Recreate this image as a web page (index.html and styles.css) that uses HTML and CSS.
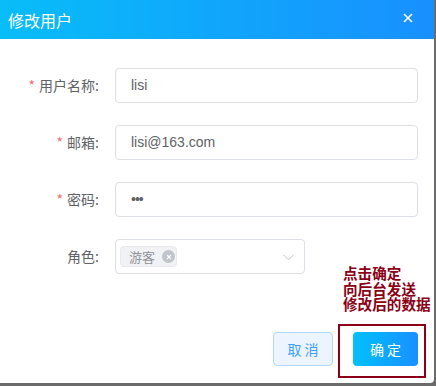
FILE: index.html
```html
<!DOCTYPE html>
<html lang="zh-CN">
<head>
    <meta charset="UTF-8">
    <title>修改用户</title>
    <link rel="stylesheet" href="styles.css">
</head>
<body>
<div class="dialog">
    <div class="dialog_header">
        <span class="dialog_title">修改用户</span>
        <span class="dialog_close">
            <svg width="10" height="10" viewBox="0 0 10 10"><path d="M1 1L9 9M9 1L1 9" stroke="#fff" stroke-width="1.6" fill="none"/></svg>
        </span>
    </div>
    <div class="dialog_body">
        <div class="form_item">
            <label class="form_label"><i class="req">*</i>用户名称:</label>
            <div class="input">lisi</div>
        </div>
        <div class="form_item">
            <label class="form_label"><i class="req">*</i>邮箱:</label>
            <div class="input">lisi@163.com</div>
        </div>
        <div class="form_item">
            <label class="form_label"><i class="req">*</i>密码:</label>
            <div class="input pwd">•••</div>
        </div>
        <div class="form_item">
            <label class="form_label">角色:</label>
            <div class="select">
                <span class="tag">游客<i class="tag_close">
                    <svg width="6" height="6" viewBox="0 0 6 6"><path d="M1 1L5 5M5 1L1 5" stroke="#fff" stroke-width="1.1" fill="none"/></svg>
                </i></span>
                <svg class="arrow" width="11" height="7" viewBox="0 0 11 7"><path d="M0.5 0.8L5.5 5.8L10.5 0.8" stroke="#c0c4cc" stroke-width="1" fill="none"/></svg>
            </div>
        </div>
    </div>
    <div class="dialog_footer">
        <button class="btn btn_cancel">取 消</button>
        <button class="btn btn_ok">确 定</button>
        <!--标注-->
        <div class="note">
            <p>点击确定</p>
            <p>向后台发送</p>
            <p>修改后的数据</p>
        </div>
        <div class="note_box"></div>
    </div>
</div>
</body>
</html>
```

FILE: styles.css
```css
*{margin: 0;padding: 0;box-sizing: border-box;}
body{
    width: 436px;
    height: 386px;
    background-color: #6b6b6b;
    font-family: "Liberation Sans", "Noto Sans CJK SC", sans-serif;
    font-size: 14px;
    color: #606266;
    overflow: hidden;
}
.dialog{
    width: 434px;
    height: 383px;
    background-color: #fff;
    border-radius: 0 0 4px 0;
}
.dialog_header{
    height: 39px;
    display: flex;
    align-items: center;
    justify-content: space-between;
    padding: 0 21px 0 8px;
    background: linear-gradient(to right, #08bdf8 0%, #1890ff 100%);
}
.dialog_title{
    color: #fff;
    font-size: 16px;
    font-family: "Noto Sans CJK SC", sans-serif;
    line-height: 20px;
}
.dialog_close{
    display: flex;
    margin-top: -3px;
}
.dialog_body{
    padding: 29px 16px 0 0;
}
.form_item{
    display: flex;
    align-items: center;
    height: 35px;
    margin-bottom: 22px;
}
.form_label{
    width: 115px;
    padding-right: 16px;
    text-align: right;
    line-height: 35px;
    color: #606266;
    font-family: "Noto Sans CJK SC", sans-serif;
}
.req{
    font-style: normal;
    color: #f56c6c;
    margin-right: 4px;
}
.input{
    flex: 1;
    height: 35px;
    line-height: 33px;
    padding: 0 15px;
    border: 1px solid #dcdfe6;
    border-radius: 4px;
    color: #606266;
}
.pwd{
    font-size: 14px;
    letter-spacing: -1px;
}
.select{
    width: 190px;
    height: 35px;
    border: 1px solid #dcdfe6;
    border-radius: 4px;
    display: flex;
    align-items: center;
    justify-content: space-between;
    padding: 0 10px 0 4px;
}
.tag{
    display: flex;
    align-items: center;
    height: 21px;
    padding: 0 1px 0 8px;
    white-space: nowrap;
    background-color: #f0f2f5;
    border: 1px solid #e9e9eb;
    border-radius: 4px;
    color: #909399;
    font-size: 13px;
    font-family: "Noto Sans CJK SC", sans-serif;
}
.tag_close{
    display: flex;
    align-items: center;
    justify-content: center;
    width: 13px;
    height: 13px;
    margin-left: 7px;
    border-radius: 50%;
    background-color: #c0c4cc;
}
.arrow{
    margin-top: 2px;
}
.dialog_footer{
    position: relative;
    display: flex;
    justify-content: flex-end;
    gap: 20px;
    padding: 36px 16px 0 0;
}
.btn{
    height: 34px;
    border-radius: 4px;
    font-size: 14px;
    font-family: "Noto Sans CJK SC", sans-serif;
    cursor: pointer;
}
.btn_cancel{
    width: 60px;
    color: #409eff;
    background-color: #ecf5ff;
    border: 1px solid #b3d8ff;
}
.btn_ok{
    width: 65px;
    color: #fff;
    border: none;
    background: linear-gradient(to right, #02c0fb 0%, #1890ff 100%);
}
/*标注*/
.note{
    position: absolute;
    left: 343px;
    top: -31px;
    font-family: "Noto Sans CJK SC", sans-serif;
    font-size: 14.6px;
    font-weight: bold;
    line-height: 15.5px;
    color: #8b0016;
}
.note_box{
    position: absolute;
    left: 338px;
    top: 28px;
    width: 88px;
    height: 54px;
    border: 2px solid #8b0016;
}
```
